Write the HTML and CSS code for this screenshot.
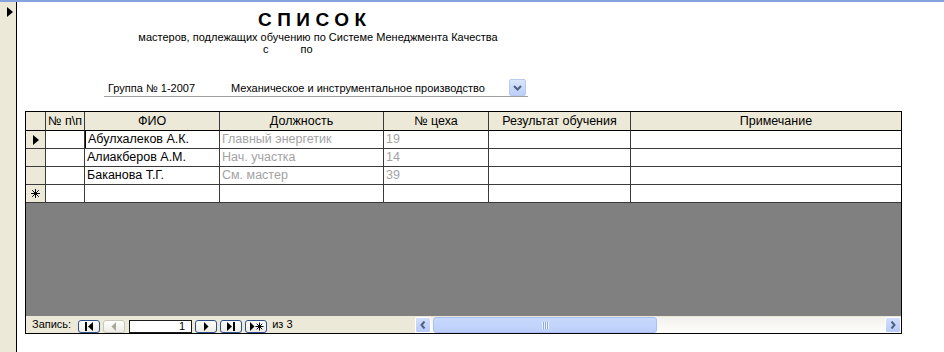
FILE: index.html
```html
<!DOCTYPE html>
<html lang="ru">
<head>
<meta charset="utf-8">
<title>Список мастеров</title>
<link rel="stylesheet" href="styles.css">
</head>
<body>
<div class="window">
  <aside class="rec-bar"><span class="tri-right"></span></aside>
  <main class="form">
    <header class="form-head">
      <h1 class="title">СПИСОК</h1>
      <p class="subtitle">мастеров, подлежащих обучению по Системе Менеджмента Качества</p>
      <p class="period"><span>с</span><span>по</span></p>
    </header>

    <div class="group-row">
      <span class="group-no">Группа № 1-2007</span>
      <span class="group-name">Механическое и инструментальное производство</span>
      <span class="combo-btn">
        <svg width="9" height="6" viewBox="0 0 9 6"><path d="M1 1 L4.5 4.5 L8 1" fill="none" stroke="#4d6185" stroke-width="2"/></svg>
      </span>
    </div>

    <section class="sheet">
      <div class="grid">
        <div class="cell hd sel"></div>
        <div class="cell hd">№ п\п</div>
        <div class="cell hd">ФИО</div>
        <div class="cell hd">Должность</div>
        <div class="cell hd">№ цеха</div>
        <div class="cell hd">Результат обучения</div>
        <div class="cell hd last">Примечание</div>

        <div class="cell sel"><span class="tri-right small"></span></div>
        <div class="cell"></div>
        <div class="cell txt caret">Абулхалеков А.К.</div>
        <div class="cell txt dim">Главный энергетик</div>
        <div class="cell txt dim">19</div>
        <div class="cell"></div>
        <div class="cell last"></div>

        <div class="cell sel"></div>
        <div class="cell"></div>
        <div class="cell txt">Алиакберов А.М.</div>
        <div class="cell txt dim">Нач. участка</div>
        <div class="cell txt dim">14</div>
        <div class="cell"></div>
        <div class="cell last"></div>

        <div class="cell sel"></div>
        <div class="cell"></div>
        <div class="cell txt">Баканова Т.Г.</div>
        <div class="cell txt dim">См. мастер</div>
        <div class="cell txt dim">39</div>
        <div class="cell"></div>
        <div class="cell last"></div>

        <div class="cell sel">
          <svg width="9" height="9" viewBox="0 0 9 9"><path d="M0 4.5 H9 M4.5 0 V9 M1.2 1.2 L7.8 7.8 M7.8 1.2 L1.2 7.8" stroke="#000" stroke-width="1"/></svg>
        </div>
        <div class="cell"></div>
        <div class="cell"></div>
        <div class="cell"></div>
        <div class="cell"></div>
        <div class="cell"></div>
        <div class="cell last"></div>
      </div>

      <div class="empty-area"></div>

      <div class="navbar">
        <span class="nav-label">Запись:</span>
        <span class="nav-btn first">
          <svg width="10" height="9" viewBox="0 0 10 9"><rect x="1" y="0" width="2" height="9" fill="#000"/><path d="M9 0 V9 L4 4.5 Z" fill="#000"/></svg>
        </span>
        <span class="nav-btn disabled">
          <svg width="6" height="9" viewBox="0 0 6 9"><path d="M5 0 V9 L0.5 4.5 Z" fill="#aca899"/></svg>
        </span>
        <span class="nav-box">1</span>
        <span class="nav-btn">
          <svg width="6" height="9" viewBox="0 0 6 9"><path d="M1 0 V9 L5.5 4.5 Z" fill="#000"/></svg>
        </span>
        <span class="nav-btn">
          <svg width="10" height="9" viewBox="0 0 10 9"><path d="M1 0 V9 L6 4.5 Z" fill="#000"/><rect x="7" y="0" width="2" height="9" fill="#000"/></svg>
        </span>
        <span class="nav-btn">
          <svg width="15" height="9" viewBox="0 0 15 9"><path d="M1 0 V9 L5.5 4.5 Z" fill="#000"/><path d="M6.5 4.5 H14.5 M10.5 0.5 V8.5 M7.7 1.7 L13.3 7.3 M13.3 1.7 L7.7 7.3" stroke="#000" stroke-width="1"/></svg>
        </span>
        <span class="nav-of">из 3</span>

        <div class="hscroll">
          <span class="sb-arrow">
            <svg width="6" height="8" viewBox="0 0 6 8"><path d="M4.5 0.5 L1.5 4 L4.5 7.5" fill="none" stroke="#4d6185" stroke-width="2"/></svg>
          </span>
          <span class="sb-thumb"><span class="grip"></span></span>
          <span class="sb-track"></span>
          <span class="sb-arrow">
            <svg width="6" height="8" viewBox="0 0 6 8"><path d="M1.5 0.5 L4.5 4 L1.5 7.5" fill="none" stroke="#4d6185" stroke-width="2"/></svg>
          </span>
        </div>
      </div>
    </section>
  </main>
</div>
</body>
</html>
```

FILE: styles.css
```css
html, body {
  margin: 0;
  padding: 0;
  background: #fff;
}

body {
  width: 944px;
  height: 352px;
  overflow: hidden;
  font-family: "Liberation Sans", Arial, sans-serif;
  color: #000;
}

.window {
  display: flex;
  height: 350px;
  border-top: 2px solid #86a2dc;
}

/* record selector strip of the form */
.rec-bar {
  flex: none;
  width: 16px;
  background: #ece9d8;
  border-right: 1px solid #000;
  display: flex;
  flex-direction: column;
  align-items: flex-start;
}

.tri-right {
  display: block;
  width: 0;
  height: 0;
  margin: 5px 0 0 7px;
  border-left: 6px solid #000;
  border-top: 5px solid transparent;
  border-bottom: 5px solid transparent;
}

.tri-right.small {
  margin: 0;
}

.form {
  flex: 1;
  display: flex;
  flex-direction: column;
  align-items: flex-start;
}

/* heading */
.form-head {
  width: 590px;
  text-align: center;
}

.title {
  margin: 10px 0 0;
  font-size: 19px;
  font-weight: bold;
  letter-spacing: 5.5px;
  padding-left: 5.5px;
  line-height: 15px;
}

.subtitle {
  margin: 4px 0 0;
  padding-left: 12px;
  font-size: 11px;
  line-height: 12px;
}

.period {
  margin: 0;
  display: flex;
  gap: 32px;
  padding-left: 246px;
  font-size: 11px;
  line-height: 13px;
}

/* group line */
.group-row {
  margin: 23px 0 0 87px;
  width: 424px;
  height: 17px;
  display: flex;
  align-items: center;
  border-bottom: 1px solid #a0a0a0;
  font-size: 11px;
}

.group-no {
  margin-left: 4px;
  width: 123px;
}

.group-name {
  flex: 1;
}

.combo-btn {
  width: 15px;
  height: 15px;
  margin-right: 2px;
  display: flex;
  align-items: center;
  justify-content: center;
  border: 1px solid #b8cbf2;
  border-radius: 2px;
  background: linear-gradient(#d9e5fd, #bccffa);
}

/* datasheet */
.sheet {
  margin: 14px 0 0 8px;
  width: 877px;
  box-sizing: border-box;
  border: 1px solid #000;
  overflow: hidden;
  display: flex;
  flex-direction: column;
}

.grid {
  display: grid;
  grid-template-columns: 20px 39px 135px 164px 105px 142px 290px;
  grid-template-rows: 19px repeat(4, 18px);
  width: 895px;
}

.cell {
  box-sizing: border-box;
  border-right: 1px solid #3a3a3a;
  border-bottom: 1px solid #3a3a3a;
  background: #fff;
  font-size: 12.5px;
  line-height: 17px;
  white-space: nowrap;
  overflow: hidden;
}

.cell.last {
  border-right: none;
}

.cell.hd {
  background: #ece9d8;
  border-bottom-color: #000;
  text-align: center;
  line-height: 18px;
}

.cell.sel {
  background: #ece9d8;
  display: flex;
  align-items: center;
  justify-content: center;
}

.cell.hd.sel {
  display: block;
}

.cell.txt {
  padding-left: 2px;
}

.cell.caret {
  padding-left: 3px;
  box-shadow: inset 1px 0 0 #000;
}

.cell.dim {
  color: #a3a3a3;
}

.empty-area {
  height: 113px;
  background: #808080;
}

/* navigation bar */
.navbar {
  height: 17px;
  background: #ece9d8;
  display: flex;
  align-items: flex-end;
  font-size: 11px;
}

.nav-label {
  margin-left: 6px;
  line-height: 13px;
  align-self: center;
}

.nav-btn {
  box-sizing: border-box;
  width: 22px;
  height: 13px;
  margin-left: 3px;
  display: flex;
  align-items: center;
  justify-content: center;
  border: 1px solid #2c4f8a;
  border-radius: 3px;
  background: linear-gradient(#ffffff, #ecebe4);
}

.nav-btn.first {
  margin-left: 7px;
}

.nav-btn.disabled {
  border-color: #c9c7ba;
}

.nav-box {
  box-sizing: border-box;
  width: 63px;
  height: 13px;
  margin-left: 4px;
  padding-right: 6px;
  border: 1px solid #1a1a1a;
  background: #fff;
  text-align: right;
  line-height: 11px;
}

.nav-of {
  margin-left: 5px;
  line-height: 13px;
  align-self: center;
}

.hscroll {
  margin-left: auto;
  width: 486px;
  height: 16px;
  display: flex;
  background: linear-gradient(#f3f1ec, #fefefb);
}

.sb-arrow {
  box-sizing: border-box;
  width: 16px;
  height: 16px;
  flex: none;
  display: flex;
  align-items: center;
  justify-content: center;
  border: 1px solid #fff;
  border-radius: 2px;
  background: linear-gradient(#d2defc, #b7cbf8);
}

.sb-thumb {
  box-sizing: border-box;
  width: 224px;
  height: 16px;
  margin-left: 2px;
  flex: none;
  display: flex;
  align-items: center;
  justify-content: center;
  border: 1px solid #aac0f3;
  border-radius: 3px;
  background: linear-gradient(#c9d9fd, #bccffa);
}

.grip {
  width: 7px;
  height: 7px;
  background: repeating-linear-gradient(90deg, #eef3ff 0 1px, #8ca6e6 1px 2px);
}

.sb-track {
  flex: 1;
}
```
